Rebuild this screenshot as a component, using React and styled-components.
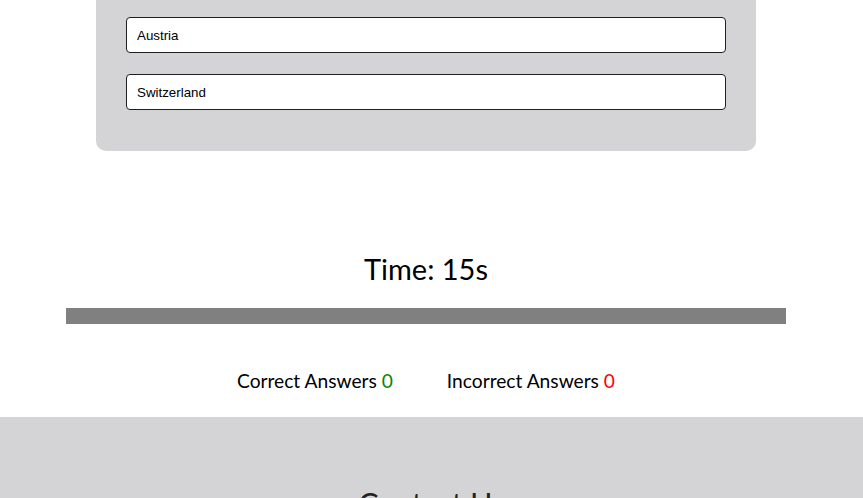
import styled, { createGlobalStyle } from "styled-components";

const GlobalStyle = createGlobalStyle`
  html, body {
    margin: 0;
    padding: 0;
    background: #ffffff;
    font-family: Lato, "Liberation Sans", sans-serif;
    overflow: hidden;
  }
`;

const Page = styled.div`
  width: 852px;
  display: flex;
  flex-direction: column;
  align-items: center;
`;

const QuestionCard = styled.div`
  width: 660px;
  box-sizing: border-box;
  background: #d4d4d6;
  border-radius: 0 0 10px 10px;
  padding: 17px 30px 41px;
  display: flex;
  flex-direction: column;
  gap: 21px;
`;

const Option = styled.input`
  width: 100%;
  height: 36px;
  box-sizing: border-box;
  border: 1px solid #1f1f1f;
  border-radius: 4px;
  background: #fff;
  padding: 0 10px;
  font-family: "Liberation Sans", Arial, sans-serif;
  font-size: 13.33px;
  color: #000;
  outline: none;
`;

const Timer = styled.h2`
  margin: 100px 0 0;
  font-family: Lato, sans-serif;
  font-weight: 400;
  font-size: 29px;
  line-height: 35px;
  color: #000;
`;

const ProgressTrack = styled.div`
  width: 720px;
  height: 16px;
  margin-top: 22px;
  background: #808080;
`;

const Score = styled.div`
  margin-top: 45px;
  display: flex;
  gap: 54px;
  font-family: Lato, sans-serif;
  font-size: 19.2px;
  line-height: 23px;
  color: #000;
`;

const Count = styled.span`
  color: ${(p) => p.$color};
`;

const Footer = styled.footer`
  margin-top: 25px;
  width: 863px;
  height: 200px;
  background: #d4d4d6;
  display: flex;
  justify-content: center;
  align-self: flex-start;
`;

const FooterTitle = styled.h2`
  margin: 68px 0 0;
  width: 863px;
  text-align: center;
  font-family: Lato, sans-serif;
  font-weight: 400;
  font-size: 30px;
  line-height: 36px;
  color: #222;
`;

export default function App() {
  return (
    <>
      <GlobalStyle />
      <Page>
        <QuestionCard>
          <Option readOnly value="Austria" />
          <Option readOnly value="Switzerland" />
        </QuestionCard>
        <Timer>Time: 15s</Timer>
        <ProgressTrack />
        <Score>
          <span>
            Correct Answers <Count $color="#008a00">0</Count>
          </span>
          <span>
            Incorrect Answers <Count $color="#ff0000">0</Count>
          </span>
        </Score>
        <Footer>
          <FooterTitle>Contact Us</FooterTitle>
        </Footer>
      </Page>
    </>
  );
}
